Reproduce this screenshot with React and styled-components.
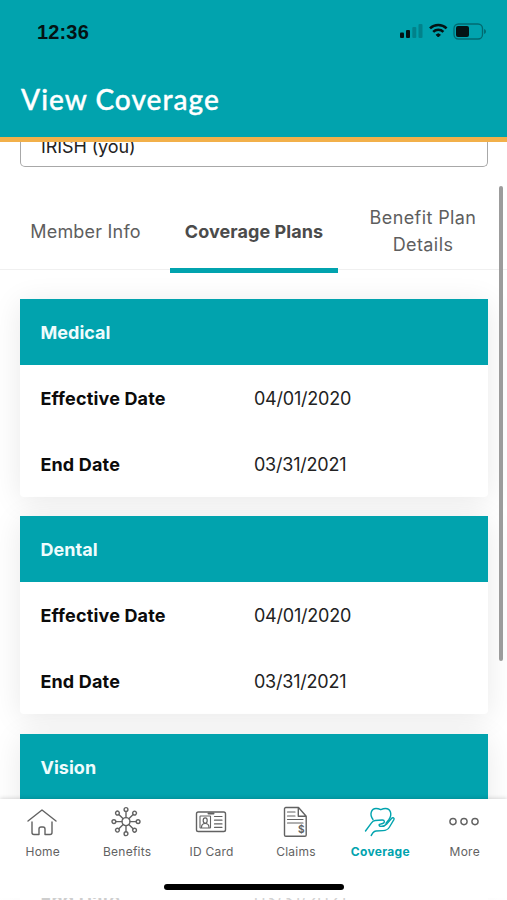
import React from "react";
import styled, { createGlobalStyle } from "styled-components";

const teal = "#01a3ae";

const GlobalStyle = createGlobalStyle`
  *, *::before, *::after { box-sizing: border-box; }
  html, body { margin: 0; padding: 0; background: #fff; overflow: hidden; }
  body { font-family: Inter, "Liberation Sans", sans-serif; }
`;

const Screen = styled.div`
  position: relative;
  display: flex;
  flex-direction: column;
  width: 507px;
  height: 900px;
  overflow: hidden;
  background: #fff;
`;

const Header = styled.header`
  flex: none;
  height: 142px;
  background: ${teal};
  border-bottom: 5px solid #f2b04a;
`;

const StatusBar = styled.div`
  display: flex;
  align-items: center;
  justify-content: space-between;
  height: 62px;
  padding: 0 21px 0 37px;
`;

const Clock = styled.time`
  margin-top: 1px;
  font: 700 20px/24px "Liberation Sans", sans-serif;
  letter-spacing: 0.15px;
  color: #041314;
`;

const StatusIcons = styled.svg`
  display: block;
  width: 88px;
  height: 20px;
`;

const Title = styled.h1`
  margin: 18px 0 0 21px;
  font: 500 28px/38px Lato, sans-serif;
  letter-spacing: 1.05px;
  color: #fff;
  -webkit-text-stroke: 0.4px #fff;
  white-space: nowrap;
`;

const Content = styled.main`
  flex: 1;
  min-height: 0;
  overflow: hidden;
`;

const MemberSelect = styled.div`
  display: flex;
  align-items: flex-end;
  height: 25px;
  margin: 0 19px 0 20px;
  padding: 0 20px 8px;
  border: 1px solid #a8a8a8;
  border-top: 0;
  border-radius: 0 0 5px 5px;
  font-size: 18px;
  line-height: 22px;
  letter-spacing: -0.1px;
  color: #222;
`;

const Tabs = styled.div`
  display: grid;
  grid-template-columns: 170px 168px 169px;
  height: 106px;
  margin-bottom: 26px;
`;

const Tab = styled.button`
  display: flex;
  align-items: center;
  justify-content: center;
  height: ${(p) => (p.$active ? "106px" : "103px")};
  padding: ${(p) => (p.$active ? "27px 0 0" : "26px 25px 0 26px")};
  border: 0;
  border-bottom: ${(p) => (p.$active ? `5px solid ${teal}` : "1px solid #f0f0f0")};
  background: none;
  font: ${(p) => (p.$active ? 700 : 400)} 18px/27px Inter, sans-serif;
  letter-spacing: ${(p) => p.$spacing};
  text-align: center;
  color: ${(p) => (p.$active ? "#4b4b4b" : "#5e5e5e")};
`;

const Plans = styled.div`
  display: flex;
  flex-direction: column;
  gap: 19.3px;
  padding: 0 19.5px 0 20.4px;
`;

const Card = styled.section`
  flex: none;
  height: 198px;
  border-radius: 0 0 4px 4px;
  background: #fff;
  box-shadow: 0 4px 30px rgba(0, 0, 0, 0.09);
`;

const CardHeader = styled.h2`
  margin: 0;
  height: 66px;
  padding: 1px 0 0 20px;
  background: ${teal};
  font-size: 18px;
  font-weight: 700;
  line-height: 66px;
  letter-spacing: 0.05px;
  color: #effcfd;
`;

const Row = styled.div`
  display: grid;
  grid-template-columns: 213.5px 1fr;
  height: 66px;
  padding: 1px 0 0 20px;
  font-size: 18px;
  line-height: 66px;
`;

const Label = styled.span`
  font-weight: 700;
  letter-spacing: 0.17px;
  color: #0b0b0b;
`;

const Value = styled.span`
  letter-spacing: -0.2px;
  color: #222;
`;

const ScrollThumb = styled.div`
  position: absolute;
  top: 186px;
  right: 4px;
  width: 4px;
  height: 475px;
  border-radius: 2px;
  background: #9c9c9c;
`;

const BottomNav = styled.nav`
  position: absolute;
  left: 0;
  right: 0;
  top: 799px;
  height: 101px;
  background: linear-gradient(#fff 99px, rgba(255, 255, 255, 0.8) 99px);
  box-shadow: 0 -1px 4px rgba(0, 0, 0, 0.14);
`;

const NavItems = styled.div`
  display: grid;
  grid-template-columns: repeat(6, 84.4px);
  height: 85px;
  padding-left: 0.6px;
`;

const NavItem = styled.div`
  display: flex;
  flex-direction: column;
  align-items: center;
  padding-top: 6px;
  color: ${(p) => (p.$active ? teal : "#626262")};
  font-size: 12px;
  font-weight: ${(p) => (p.$active ? 700 : 400)};
  line-height: 16px;
  letter-spacing: ${(p) => (p.$active ? "0.35px" : "0.25px")};
  white-space: nowrap;
`;

const Icon = styled.svg`
  display: block;
  width: 34px;
  height: 34px;
  margin: 0 1.5px 5px 0;
  fill: none;
  stroke: currentColor;
  stroke-width: 1.4;
  stroke-linecap: round;
  stroke-linejoin: round;
`;

const HomeIndicator = styled.div`
  width: 180px;
  height: 6px;
  margin: 0 auto;
  border-radius: 3px;
  background: #000;
`;

const HomeIcon = () => (
  <Icon viewBox="0 0 34 34">
    <path d="M3 16 17 5l14 11M7 17v10.5a2 2 0 0 0 2 2h5v-5.5a2 2 0 0 1 2-2h2a2 2 0 0 1 2 2v5.5h5a2 2 0 0 0 2-2V17" />
  </Icon>
);

const BenefitsIcon = () => (
  <Icon viewBox="0 0 34 34">
    <circle cx="17" cy="16.6" r="4" />
    {[0, 45, 90, 135, 180, 225, 270, 315].map((angle) => (
      <g key={angle} transform={`rotate(${angle} 17 16.6)`}>
        <path d="M17 12.6V6.5" />
        <circle cx="17" cy="4.5" r="1.9" />
      </g>
    ))}
  </Icon>
);

const IdCardIcon = () => (
  <Icon viewBox="0 0 34 34">
    <rect x="2.5" y="7" width="29" height="19.5" rx="1.8" />
    <path d="M14.5 8.5h5" strokeWidth="2" />
    <rect x="6" y="11" width="10.5" height="12" rx="0.5" strokeWidth="1.1" />
    <ellipse cx="11.2" cy="15.6" rx="2" ry="2.7" strokeWidth="1.2" />
    <path d="M7.5 22.5c0-3 2-4 3.7-4s3.8 1 3.8 4M20.5 11.5H28M20.5 15.2H28M20.5 18.9H28M20.5 22.3H28" strokeWidth="1.2" />
  </Icon>
);

const Dollar = styled.text`
  font: 700 10px Inter, sans-serif;
  fill: currentColor;
  stroke: none;
`;

const ClaimsIcon = () => (
  <Icon viewBox="0 0 34 34">
    <path d="M7.8 2.5h12.7l7.7 8.7V30a1.3 1.3 0 0 1-1.3 1.3H7.8A1.3 1.3 0 0 1 6.5 30V3.8a1.3 1.3 0 0 1 1.3-1.3ZM20.3 2.8v8.5h7.6" />
    <path d="M9.5 7H17M9.5 11H17M9.5 14.5H25M9.5 18H25" strokeWidth="1.2" />
    <Dollar x="20" y="28.4">$</Dollar>
  </Icon>
);

const CoverageIcon = () => (
  <Icon viewBox="0 0 34 34">
    <path d="M10 14.5C6 9 8.5 3.5 13 3.5c2 0 3.200.5 4.800 1.200 1.500-.7 2.700-1.200 4.700-1.200 5 0 7 5.500 3.500 11L23 18.200" />
    <path d="M2.500 26 8.500 17.800c1.200-1.700 2-2.200 3.700-2.300l7-.5c2.800-.1 2.800 2.800.5 3.500l-3.200.9c-1 .8.100 2 1.500 2 2.500 0 4.300-.6 5.700-2.400l5-5.700c1.200-1.300 3-.1 2.200 1.400L26.500 22c-1.500 2.500-3.500 3.500-6.500 3.600l-7 .4c-1.500.1-2.200.7-3 1.700L8.200 30.500" />
  </Icon>
);

const MoreIcon = () => (
  <Icon viewBox="0 0 34 34">
    <circle cx="6" cy="16.6" r="3.1" />
    <circle cx="17" cy="16.6" r="3.1" />
    <circle cx="28" cy="16.6" r="3.1" />
  </Icon>
);

const plans = ["Medical", "Dental", "Vision"];

const navItems = [
  { label: "Home", Glyph: HomeIcon },
  { label: "Benefits", Glyph: BenefitsIcon },
  { label: "ID Card", Glyph: IdCardIcon },
  { label: "Claims", Glyph: ClaimsIcon },
  { label: "Coverage", Glyph: CoverageIcon, active: true },
  { label: "More", Glyph: MoreIcon },
];

export default function App() {
  return (
    <>
      <GlobalStyle />
      <Screen>
        <Header>
          <StatusBar>
            <Clock>12:36</Clock>
            <StatusIcons viewBox="0 0 88 20">
              <g fill="#041314">
                <rect x="2" y="11.5" width="4" height="5.5" rx="1" />
                <rect x="8" y="9" width="4" height="8" rx="1" />
                <g opacity="0.22">
                  <rect x="14.3" y="6" width="4" height="11" rx="1" />
                  <rect x="20.5" y="3" width="4" height="14" rx="1" />
                </g>
                <path d="M40.3 16 38.2 13.8a3 3 0 0 1 4.2 0Z" stroke="#041314" strokeLinejoin="round" />
                <rect x="58" y="5" width="13" height="11" rx="2" />
                <path d="M86.2 8v5c2.2-.8 2.2-4.2 0-5Z" opacity="0.45" />
              </g>
              <g fill="none" stroke="#041314">
                <path d="M32 7.4a11.8 11.8 0 0 1 16.6 0M35.2 10.8a7.2 7.2 0 0 1 10.2 0" strokeWidth="2.5" />
                <rect x="56" y="3" width="28.5" height="15" rx="4.5" strokeWidth="1.3" opacity="0.4" />
              </g>
            </StatusIcons>
          </StatusBar>
          <Title>View Coverage</Title>
        </Header>
        <Content>
          <MemberSelect>IRISH (you)</MemberSelect>
          <Tabs>
            <Tab $spacing="0.2px">Member Info</Tab>
            <Tab $active $spacing="0.08px">Coverage Plans</Tab>
            <Tab $spacing="0.4px">Benefit Plan Details</Tab>
          </Tabs>
          <Plans>
            {plans.map((name) => (
              <Card key={name}>
                <CardHeader>{name}</CardHeader>
                <Row>
                  <Label>Effective Date</Label>
                  <Value>04/01/2020</Value>
                </Row>
                <Row>
                  <Label>End Date</Label>
                  <Value>03/31/2021</Value>
                </Row>
              </Card>
            ))}
          </Plans>
        </Content>
        <ScrollThumb />
        <BottomNav>
          <NavItems>
            {navItems.map(({ label, Glyph, active }) => (
              <NavItem key={label} $active={active}>
                <Glyph />
                {label}
              </NavItem>
            ))}
          </NavItems>
          <HomeIndicator />
        </BottomNav>
      </Screen>
    </>
  );
}
